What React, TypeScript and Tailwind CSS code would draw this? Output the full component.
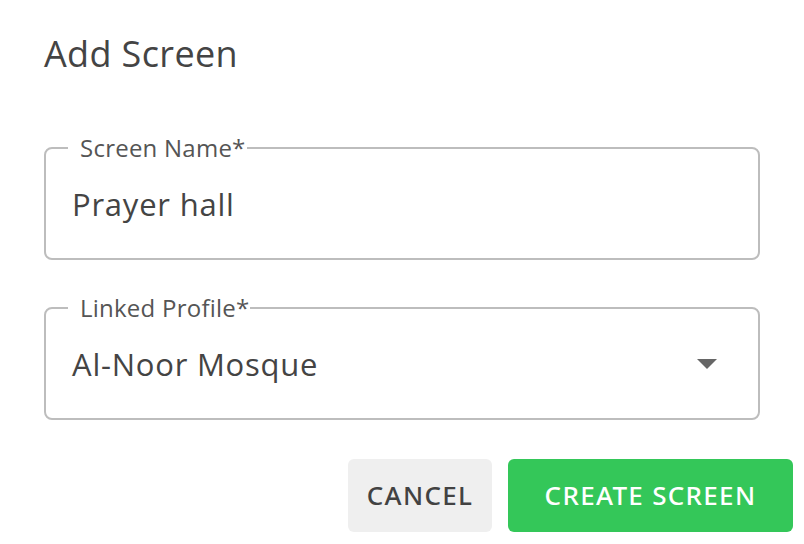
export default function App() {
  return (
    <main className="h-[544px] w-[804px] bg-white font-['Open_Sans',sans-serif] text-[#444]">
      <div className="px-[44px] pt-[30px]">
        <h2 className="text-[36px] leading-[48px] tracking-[0.01em]">Add Screen</h2>

        <div className="mt-[56px] flex flex-col gap-[34px]">
          <fieldset className="h-[126px] rounded-lg border-2 border-[#bdbdbd] px-[26px]">
            <legend className="ml-[-4px] pl-[12px] pr-[1px] text-[24px] leading-[28px] tracking-[0.01em] text-[#555]">
              Screen Name*
            </legend>
            <div className="pt-[22px] text-[31px] leading-[40px] tracking-[0.025em]">
              Prayer hall
            </div>
          </fieldset>

          <fieldset className="h-[126px] rounded-lg border-2 border-[#bdbdbd] pl-[26px] pr-[41px]">
            <legend className="ml-[-4px] pl-[12px] pr-[1px] text-[24px] leading-[28px] tracking-[0.01em] text-[#555]">
              Linked Profile*
            </legend>
            <div className="flex items-center justify-between pt-[22px]">
              <span className="text-[31px] leading-[40px] tracking-[0.025em]">Al-Noor Mosque</span>
              <svg width="20" height="10" viewBox="0 0 20 10">
                <path d="M0 0 L20 0 L10 10 Z" fill="#666" />
              </svg>
            </div>
          </fieldset>
        </div>

        <div className="-mr-[33px] mt-[39px] flex justify-end gap-[16px] font-['Noto_Sans',sans-serif]">
          <button className="h-[73px] w-[144px] rounded-md bg-[#efefef] text-[26px] font-medium tracking-[0.05em] text-[#424242]">
            CANCEL
          </button>
          <button className="h-[73px] w-[285px] rounded-md bg-[#34c759] text-[26px] font-medium tracking-[0.05em] text-white">
            CREATE SCREEN
          </button>
        </div>
      </div>
    </main>
  );
}
